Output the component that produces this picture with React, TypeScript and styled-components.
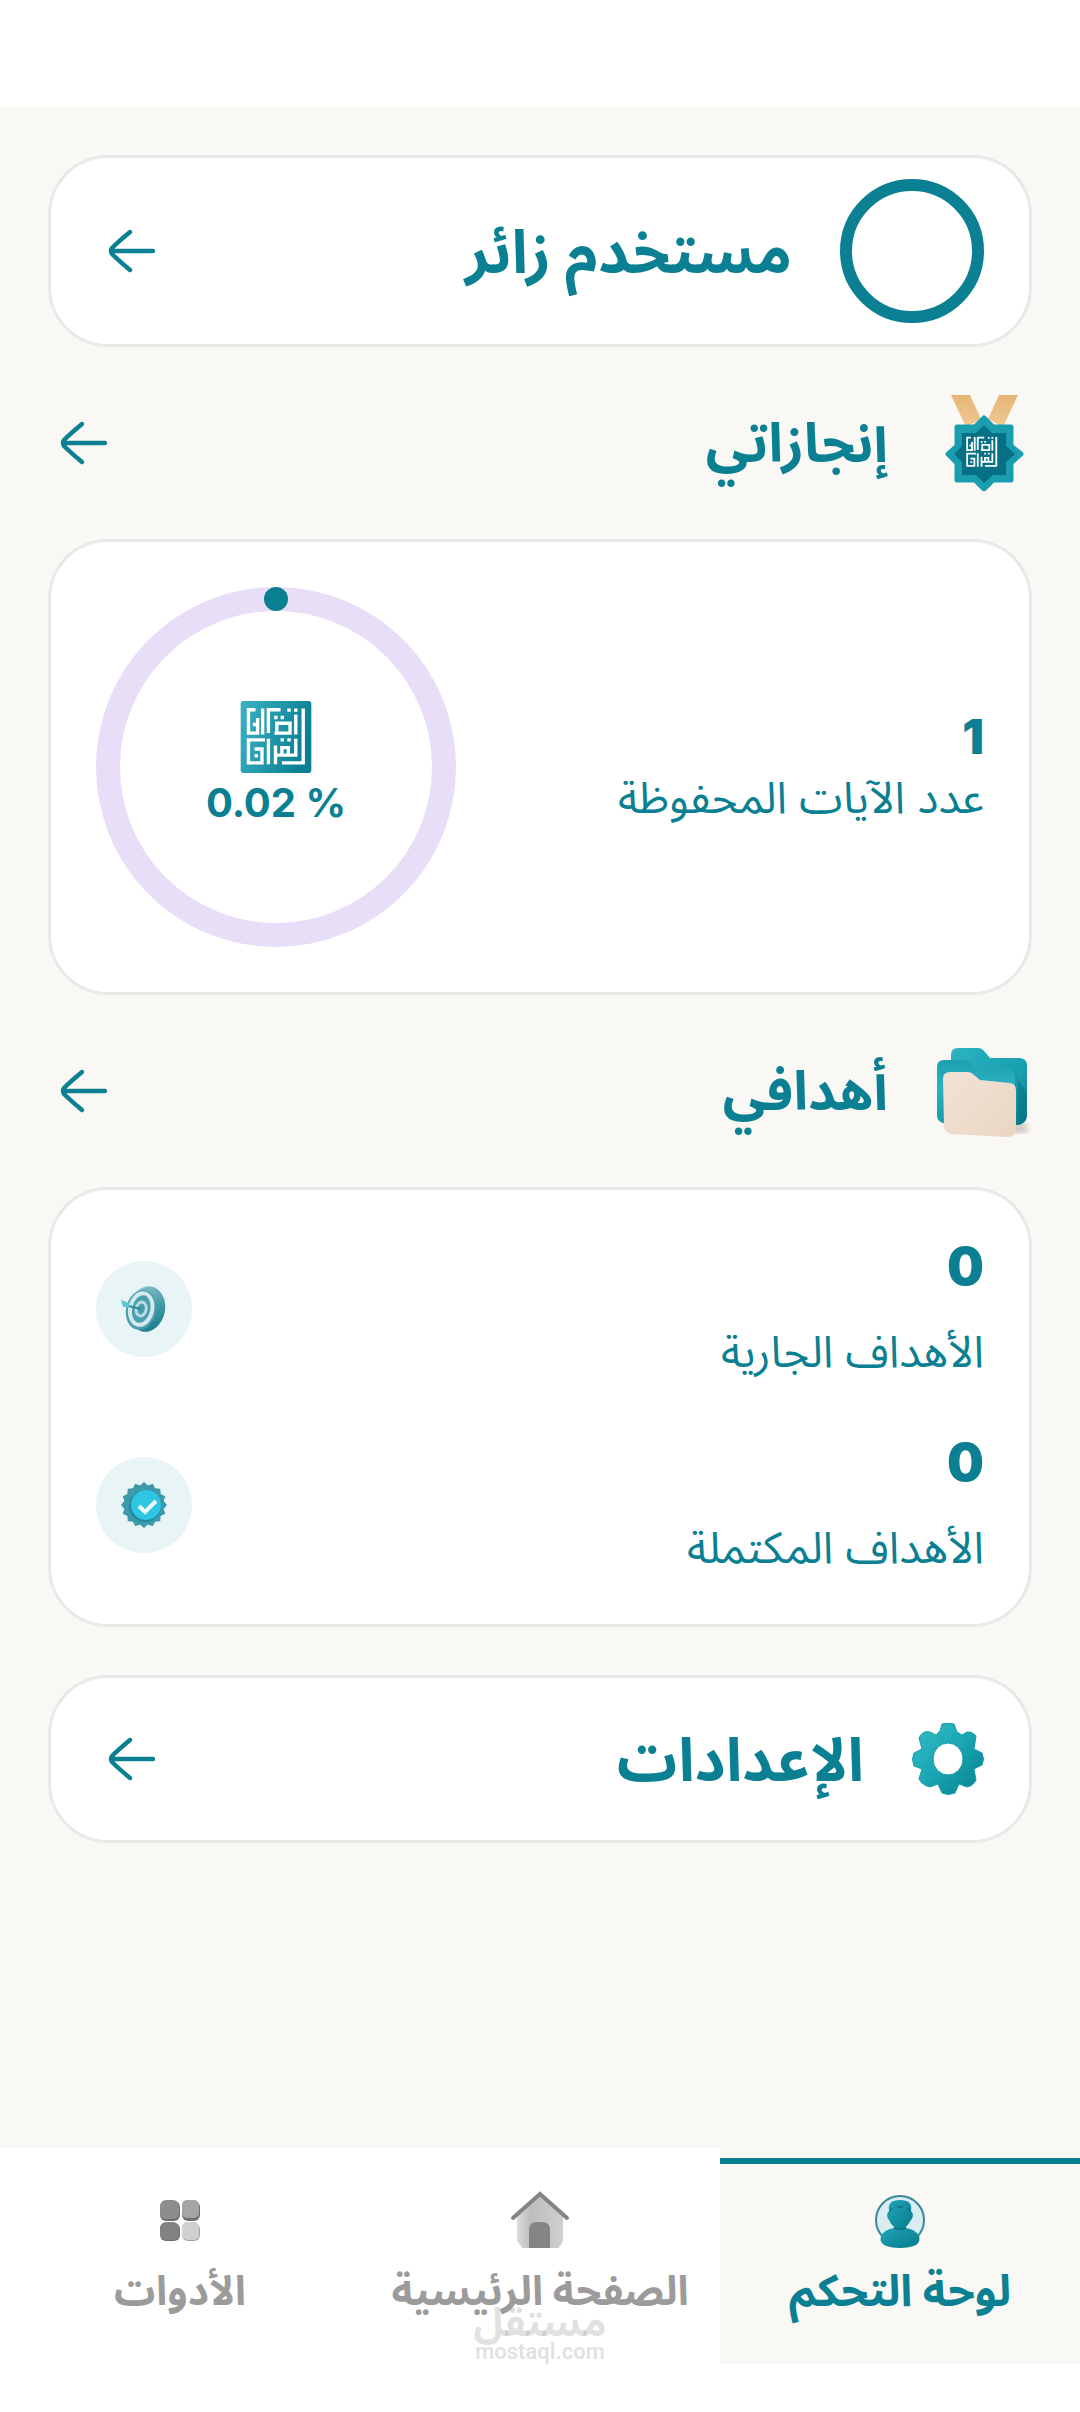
import React from 'react';
import styled, { createGlobalStyle } from 'styled-components';

const teal = '#0b8093';
const cream = '#f9f8f4';

const GlobalStyle = createGlobalStyle`
  * { box-sizing: border-box; }
  body {
    margin: 0;
    background: #fff;
    color: ${teal};
    font-family: Inter, "Noto Sans Arabic", "DejaVu Sans", sans-serif;
  }
  h1, h2, p { margin: 0; }
`;

const Page = styled.div`
  display: flex;
  flex-direction: column;
  min-height: 100vh;
  padding: 107px 0 48px;
`;

const Content = styled.main`
  flex: 1;
  display: flex;
  flex-direction: column;
  gap: 48px;
  padding: 48px;
  background: ${cream};
`;

const Card = styled.section`
  border: 3px solid #e9e9e9;
  border-radius: 60px;
  background: #fff;
`;

const LinkCard = styled.a<{ $pad: number }>`
  display: flex;
  align-items: center;
  gap: 48px;
  padding: ${(p) => p.$pad}px 45px;
  border: 3px solid #e9e9e9;
  border-radius: 60px;
  background: #fff;
  color: inherit;
  text-decoration: none;
`;

const CardTitle = styled.h1`
  flex: 1;
  font-size: 60px;
  line-height: 72px;
  font-weight: 700;
`;

const Avatar = styled.span`
  width: 144px;
  height: 144px;
  border: 12px solid ${teal};
  border-radius: 50%;
`;

const SectionHead = styled.div`
  display: flex;
  align-items: center;
  gap: 48px;
`;

const SectionTitle = styled.h2`
  flex: 1;
  font-size: 54px;
  line-height: 72px;
  font-weight: 700;
`;

const ArrowButton = styled.button`
  display: flex;
  padding: 0;
  border: 0;
  background: none;
  color: inherit;
  cursor: pointer;
`;

const ProgressCard = styled(Card)`
  display: flex;
  align-items: center;
  justify-content: space-between;
  padding: 45px;
`;

const Ring = styled.div`
  display: flex;
  flex-direction: column;
  align-items: center;
  justify-content: center;
  width: 360px;
  height: 360px;
  position: relative;
`;

const RingTrack = styled.svg`
  position: absolute;
  inset: 0;
`;

const Percent = styled.p`
  font-size: 40px;
  line-height: 60px;
  font-weight: 700;
`;

const Count = styled.p<{ $large?: boolean }>`
  font-size: ${(p) => (p.$large ? 52 : 48)}px;
  line-height: ${(p) => (p.$large ? 84 : 60)}px;
  font-weight: 900;
`;

const Label = styled.p<{ $large?: boolean }>`
  font-size: 44px;
  line-height: ${(p) => (p.$large ? 84 : 60)}px;
`;

const GoalsCard = styled(Card)`
  padding: 21px 45px;
`;

const GoalRow = styled.div`
  display: flex;
  align-items: center;
  justify-content: space-between;
  height: 196px;
`;

const GoalIcon = styled.span`
  display: flex;
  align-items: center;
  justify-content: center;
  width: 96px;
  height: 96px;
  border-radius: 50%;
  background: #e8f4f6;
`;

const TabBar = styled.nav`
  display: grid;
  grid-template-columns: repeat(3, 1fr);
  position: relative;
`;

const Tab = styled.a<{ $active?: boolean }>`
  display: flex;
  flex-direction: column;
  align-items: center;
  height: 216px;
  padding-top: 10px;
  background: ${(p) => (p.$active ? cream : '#fff')};
  color: ${(p) => (p.$active ? teal : '#9b9b9b')};
  font-size: ${(p) => (p.$active ? 44 : 41)}px;
  line-height: 60px;
  font-weight: 700;
  text-decoration: none;
  white-space: nowrap;

  &::before {
    content: '';
    width: 100%;
    height: 6px;
    background: ${(p) => (p.$active ? teal : 'transparent')};
  }

  svg { margin: 24px 0 12px; }
`;

const Watermark = styled.div`
  position: absolute;
  left: 50%;
  bottom: 0;
  transform: translateX(-50%);
  display: flex;
  flex-direction: column;
  align-items: center;
  color: rgba(150, 150, 150, 0.3);
  font-size: 40px;
  line-height: 36px;
  font-weight: 700;
`;

const Site = styled.span`
  font-family: Roboto, sans-serif;
  font-size: 22px;
  line-height: 24px;
  font-weight: 600;
`;

const Arrow = () => (
  <svg width="72" height="72" viewBox="0 0 72 72" fill="none" stroke="currentColor" strokeWidth="4.4" strokeLinecap="round" strokeLinejoin="round" aria-hidden="true">
    <path d="M15 36H57M34 17C28 22 22 27 16 33Q14 36 16 39C22 45 28 50 34 55" />
  </svg>
);

// strokes of the square emblem, shared by the medal and the progress ring
const EmblemLines = () => (
  <g fill="none" stroke="#fff" strokeWidth="10">
    <path d="M44 26H23V95H50V50M65 22V99M118 26H82V95M100 95H146V66H107V95M163 40V99M185 22V183H122M41 64V75" />
    <path d="M99 49H109M118 49H128M138 27H148M158 27H168M118 115H128M138 115H148M41 162H51" />
    <path d="M72 115H23V183H63V142H41M82 112V187M103 132V187M103 160H163V112M122 160V138H141V160" />
  </g>
);

const Emblem = () => (
  <svg width="72" height="72" viewBox="0 0 209 213" aria-hidden="true">
    <defs>
      <linearGradient id="emblem" x1="0" y1="0" x2="1" y2="0.3">
        <stop offset="0" stopColor="#3cb2c4" />
        <stop offset="0.5" stopColor="#2399ac" />
        <stop offset="1" stopColor="#0b8093" />
      </linearGradient>
    </defs>
    <rect width="209" height="213" rx="8" fill="url(#emblem)" />
    <EmblemLines />
  </svg>
);

const Medal = () => (
  <svg width="96" height="96" viewBox="0 0 96 96" aria-hidden="true">
    <defs>
      <linearGradient id="ribbon" x1="0" y1="0" x2="0" y2="1">
        <stop offset="0" stopColor="#e6b676" />
        <stop offset="1" stopColor="#efc892" />
      </linearGradient>
    </defs>
    <path d="M15 0H34L45 24L30 32ZM82 0H63L52 24L67 32Z" fill="url(#ribbon)" />
    <path d="M48 23L57 32H75V51L85 59L75 68V85H57L48 94L39 85H21V68L12 59L21 51V32H39Z" fill="#1a9daf" stroke="#1a9daf" strokeWidth="5" strokeLinejoin="round" />
    <path d="M48 30L56 38H70V51L79 59L70 67V80H57L48 88L40 80H26V67L18 59L26 51V38H40Z" fill="#067184" />
    <g transform="translate(27 38) scale(0.18)"><EmblemLines /></g>
  </svg>
);

const Folder = () => (
  <svg width="96" height="96" viewBox="0 0 96 96" aria-hidden="true">
    <defs>
      <linearGradient id="folderBack" x1="0" y1="0" x2="1" y2="1">
        <stop offset="0" stopColor="#2bb3c3" />
        <stop offset="0.6" stopColor="#18a0b1" />
        <stop offset="1" stopColor="#067b8d" />
      </linearGradient>
      <linearGradient id="folderMid" x1="0" y1="0" x2="0" y2="1">
        <stop offset="0" stopColor="#1c9fb0" />
        <stop offset="0.4" stopColor="#2db0c0" />
        <stop offset="1" stopColor="#1a9bac" />
      </linearGradient>
      <linearGradient id="folderFront" x1="0" y1="0" x2="1" y2="1">
        <stop offset="0" stopColor="#f2e3d6" />
        <stop offset="1" stopColor="#ead5c2" />
      </linearGradient>
      <filter id="folderSoft"><feGaussianBlur stdDeviation="3" /></filter>
    </defs>
    <path d="M22 80H91V90H30Z" fill="#cfc5be" filter="url(#folderSoft)" />
    <path d="M15 12Q15 5 22 5H42Q46 5 49 9L54 15H83Q91 15 91 23V73Q90 81 82 82H15Z" fill="url(#folderBack)" />
    <path d="M77 30Q82 32 82 40V82Q90 80 91 73V50Z" fill="#056f80" opacity="0.5" />
    <path d="M1 24Q1 17 8 17H27Q31 17 34 20L40 26H71Q79 26 79 34V76L10 81Q1 79 1 73Z" fill="url(#folderMid)" />
    <path d="M7 36Q7 29 14 29H32Q35 29 38 32L44 37L74 40Q80 41 80 47V85Q80 94 71 94L16 91Q8 90 8 82Z" fill="url(#folderFront)" />
  </svg>
);

const Gear = () => (
  <svg width="72" height="72" viewBox="0 0 72 72" aria-hidden="true">
    <defs>
      <linearGradient id="gear" x1="0" y1="0" x2="1" y2="1">
        <stop offset="0" stopColor="#36bdc6" />
        <stop offset="0.5" stopColor="#18a5b1" />
        <stop offset="1" stopColor="#087f8e" />
      </linearGradient>
    </defs>
    <path
      fillRule="evenodd"
      fill="url(#gear)"
      stroke="#189daa"
      strokeWidth="1"
      strokeLinejoin="round"
      d="M30 1Q36 -1 42 1L45 9L50 12L55 9Q60 8 64 13L62 26L70 30Q73 36 70 42L62 46L64 57Q61 63 55 64L47 61L43 70Q36 73 30 70L26 61L18 64Q10 62 7 56L10 46L2 43Q-1 36 2 30L10 26L7 15Q11 7 18 9L24 12L28 8ZM36 20A15 16 0 1 0 36 52A15 16 0 1 0 36 20Z"
    />
  </svg>
);

const Target = () => (
  <svg width="48" height="48" viewBox="0 0 48 48" aria-hidden="true">
    <defs>
      <linearGradient id="target" x1="0" y1="0" x2="0.6" y2="1">
        <stop offset="0" stopColor="#8fc9d3" />
        <stop offset="1" stopColor="#1b7f8f" />
      </linearGradient>
    </defs>
    <ellipse cx="27" cy="24" rx="18" ry="23" fill="url(#target)" transform="rotate(12 27 24)" />
    <g transform="rotate(12 21 25)" fill="none">
      <ellipse cx="21" cy="25" rx="15" ry="20" fill="#4a9fae" />
      <ellipse cx="21" cy="24" rx="11" ry="16" stroke="#d5e9ec" strokeWidth="4" />
      <ellipse cx="21" cy="24" rx="5" ry="7" stroke="#b8dbe1" strokeWidth="3" />
    </g>
    <path d="M4 20L21 24" stroke="#2c8b9b" strokeWidth="2" />
    <path d="M1 15L9 18V22L3 22Z" fill="#5cc4d6" />
  </svg>
);

const points = Array.from({ length: 32 }, (_, i) => {
  const r = i % 2 ? 20 : 23;
  const a = (i * Math.PI) / 16;
  return `${24 + r * Math.sin(a)},${24 - r * Math.cos(a)}`;
}).join(' ');

const Verified = () => (
  <svg width="48" height="48" viewBox="0 0 48 48" aria-hidden="true">
    <polygon points={points} fill="#3c9aaa" />
    <circle cx="25" cy="25" r="16" fill="#2488a0" />
    <circle cx="26" cy="24" r="15" fill="#2fc6e3" />
    <path d="M19 25L25 31L36 20" fill="none" stroke="#eefafc" strokeWidth="4" />
  </svg>
);

const UserIcon = () => (
  <svg width="60" height="60" viewBox="0 0 60 60" aria-hidden="true">
    <defs>
      <linearGradient id="user" x1="0" y1="0" x2="1" y2="1">
        <stop offset="0" stopColor="#1fa5b6" />
        <stop offset="1" stopColor="#077a8d" />
      </linearGradient>
    </defs>
    <circle cx="30" cy="32" r="24" fill="#d9edf1" stroke="#35899a" strokeWidth="2" />
    <path d="M19 23Q17 12 30 12Q43 12 41 23Q45 27 41 32Q38 37 36 39V44H24V39Q21 37 19 32Q15 27 19 23Z" fill="url(#user)" />
    <path d="M24 40Q30 43 36 40Q45 41 49 48Q51 53 46 57Q40 60 30 60Q20 60 14 57Q9 53 11 48Q15 41 24 40Z" fill="url(#user)" />
    <path d="M20 23L22 20M38 20L40 23M27 19H33M24 40Q30 43 36 40" stroke="#075f70" strokeWidth="1" fill="none" />
  </svg>
);

const HomeIcon = () => (
  <svg width="60" height="60" viewBox="0 0 60 60" aria-hidden="true">
    <defs>
      <linearGradient id="house" x1="0" y1="0" x2="1" y2="0">
        <stop offset="0" stopColor="#dcdcdc" />
        <stop offset="0.3" stopColor="#bdbdbd" />
        <stop offset="1" stopColor="#d0d0d0" />
      </linearGradient>
    </defs>
    <path d="M7 27L30 6L53 27V53L48 61H13L7 53Z" fill="url(#house)" />
    <path d="M19 60V42Q19 34 27 34H32Q40 34 40 42V60Z" fill="#858585" />
    <path d="M3 30L30 6L57 30" fill="none" stroke="#858585" strokeWidth="4" strokeLinecap="round" />
  </svg>
);

const GridIcon = () => (
  <svg width="60" height="60" viewBox="0 0 60 60" aria-hidden="true">
    <g fill="#6f6f6f">
      <rect x="10" y="13" width="20" height="20" rx="6" />
      <rect x="32" y="13" width="18" height="20" rx="6" />
      <rect x="10" y="35" width="20" height="18" rx="6" />
      <rect x="32" y="35" width="18" height="18" rx="6" fill="#a2a2a2" />
    </g>
    <rect x="10" y="12" width="19" height="19" rx="6" fill="#8d8d8d" />
    <rect x="32" y="12" width="17" height="18" rx="5" fill="#a5a5a5" />
    <rect x="10" y="34" width="19" height="18" rx="6" fill="#828282" />
    <rect x="32" y="34" width="17" height="18" rx="5" fill="#d0d0d0" />
  </svg>
);

const goals = [
  { label: 'الأهداف الجارية', count: 0, icon: <Target /> },
  { label: 'الأهداف المكتملة', count: 0, icon: <Verified /> },
];

const App: React.FC = () => {
  return (
    <Page dir="rtl" lang="ar">
      <GlobalStyle />
      <Content>
        <LinkCard href="#profile" $pad={21}>
          <Avatar />
          <CardTitle>مستخدم زائر</CardTitle>
          <Arrow />
        </LinkCard>

        <SectionHead>
          <Medal />
          <SectionTitle>إنجازاتي</SectionTitle>
          <ArrowButton aria-label="إنجازاتي"><Arrow /></ArrowButton>
        </SectionHead>
        <ProgressCard>
          <div>
            <Count>1</Count>
            <Label>عدد الآيات المحفوظة</Label>
          </div>
          <Ring>
            <RingTrack viewBox="0 0 360 360" aria-hidden="true">
              <circle cx="180" cy="180" r="168" fill="none" stroke="#e8def8" strokeWidth="24" />
              <circle cx="180" cy="12" r="12" fill={teal} />
            </RingTrack>
            <Emblem />
            <Percent dir="ltr">0.02 %</Percent>
          </Ring>
        </ProgressCard>

        <SectionHead>
          <Folder />
          <SectionTitle>أهدافي</SectionTitle>
          <ArrowButton aria-label="أهدافي"><Arrow /></ArrowButton>
        </SectionHead>
        <GoalsCard>
          {goals.map((goal) => (
            <GoalRow key={goal.label}>
              <div>
                <Count $large>{goal.count}</Count>
                <Label $large>{goal.label}</Label>
              </div>
              <GoalIcon>{goal.icon}</GoalIcon>
            </GoalRow>
          ))}
        </GoalsCard>

        <LinkCard href="#settings" $pad={45}>
          <Gear />
          <CardTitle as="h2">الإعدادات</CardTitle>
          <Arrow />
        </LinkCard>
      </Content>

      <TabBar>
        <Tab href="#dashboard" $active aria-current="page"><UserIcon />لوحة التحكم</Tab>
        <Tab href="#home"><HomeIcon />الصفحة الرئيسية</Tab>
        <Tab href="#tools"><GridIcon />الأدوات</Tab>
        <Watermark>
          مستقل
          <Site>mostaql.com</Site>
        </Watermark>
      </TabBar>
    </Page>
  );
};

export default App;
